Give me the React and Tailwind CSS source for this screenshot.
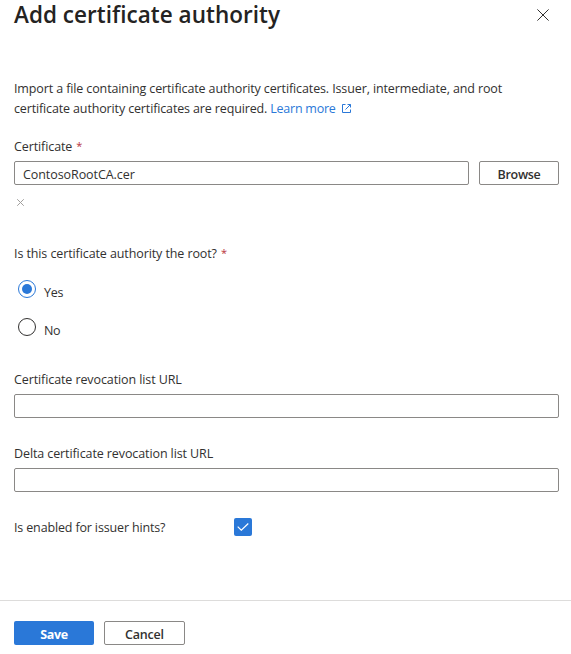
const label = "h-5 text-[12.5px] leading-5 whitespace-nowrap tracking-[-0.1px]";

function Cross({ size, className }) {
  return (
    <svg width={size} height={size} viewBox="0 0 12 12" fill="none" stroke="currentColor" className={className}>
      <path d="M0.4 0.4 11.6 11.6M11.6 0.4 0.4 11.6" strokeWidth={12 / size} />
    </svg>
  );
}

function Required() {
  return <span className="ml-1 inline-block h-5 align-top text-[11px] leading-[18px] text-[#b8323a]">*</span>;
}

function Radio({ checked, text }) {
  return (
    <label className="flex h-[18px] items-start gap-2 pl-1">
      <span
        className={`flex size-[18px] items-center justify-center rounded-full border ${checked ? "border-[#2a78d8]" : "border-[#323130]"}`}
      >
        {checked && <span className="size-[10px] rounded-full bg-[#2a78d8]" />}
      </span>
      <span className="mt-[3px] text-[12.5px] leading-5 tracking-[-0.3px]">{text}</span>
    </label>
  );
}

export default function App() {
  return (
    <main className="flex h-[654px] w-[571px] flex-col overflow-hidden bg-white font-['Open_Sans','Noto_Sans',sans-serif] text-[#323130]">
      <header className="flex h-[30px] items-center justify-between pr-[22px] pl-3.5">
        <h1 className="text-[22.5px] leading-[30px] font-semibold tracking-[0.03px] whitespace-nowrap text-[#242322]">
          Add certificate authority
        </h1>
        <Cross size={12} />
      </header>

      <section className="mt-[49px] pr-3 pl-3.5">
        <p className="text-[12.5px] leading-5 whitespace-nowrap">
          <span className="tracking-[-0.12px]">
            Import a file containing certificate authority certificates. Issuer, intermediate, and root
          </span>
          <br />
          <span className="tracking-[-0.14px]">certificate authority certificates are required. </span>
          <a className="tracking-[-0.25px] text-[#2a78d8]">
            Learn more
            <svg width="9" height="9" viewBox="0 0 9 9" fill="none" stroke="currentColor" className="ml-1.5 inline-block align-[0px]">
              <path d="M3.5 .5H.5v8h8V5.5M5.5 .5h3V3.5M8.5.5 3.5 5.5" />
            </svg>
          </a>
        </p>

        <div className={`${label} mt-[18px]`}>Certificate<Required /></div>
        <div className="mt-1 flex gap-2.5">
          <div className="h-6 flex-1 rounded-xs border border-[#8a8886] pl-2 text-[12.5px] leading-[25px] tracking-[-0.07px]">
            ContosoRootCA.cer
          </div>
          <button className="h-6 w-20 rounded-xs border border-[#8a8886] text-[12.5px] leading-[25px] font-semibold tracking-[-0.3px]">
            Browse
          </button>
        </div>
        <Cross size={7} className="mt-[14px] ml-[3px] text-[#a19f9d]" />

        <div className={`${label} mt-[38px]`}>Is this certificate authority the root?<Required /></div>
        <div className="mt-4 flex flex-col gap-5">
          <Radio checked text="Yes" />
          <Radio text="No" />
        </div>

        <div className={`${label} mt-[34px]`}>Certificate revocation list URL</div>
        <div className="mt-1 h-6 rounded-xs border border-[#8a8886]" />
        <div className={`${label} mt-[26px]`}>Delta certificate revocation list URL</div>
        <div className="mt-1 h-6 rounded-xs border border-[#8a8886]" />

        <div className="mt-[26px] flex h-[18px] items-start">
          <span className="h-5 w-[220px] text-[12.5px] leading-5 tracking-[-0.15px] whitespace-nowrap">Is enabled for issuer hints?</span>
          <span className="flex size-[18px] items-center justify-center rounded-xs bg-[#2a78d8] text-white">
            <svg width="12" height="8" viewBox="0 0 12 8" fill="none" stroke="currentColor">
              <path d="M.7 3.6 4.3 7.2 11.3.5" strokeWidth="1.2" />
            </svg>
          </span>
        </div>
      </section>

      <footer className="mt-16 flex gap-2.5 border-t border-[#dddcdb] pt-5 pl-3.5">
        <button className="h-6 w-20 rounded-xs bg-[#2a78d8] text-[12.5px] leading-[27px] font-bold tracking-[-0.3px] text-white">
          Save
        </button>
        <button className="h-6 w-[81px] rounded-xs border border-[#8a8886] text-[12.5px] leading-[25px] font-semibold tracking-[-0.2px]">
          Cancel
        </button>
      </footer>
    </main>
  );
}
